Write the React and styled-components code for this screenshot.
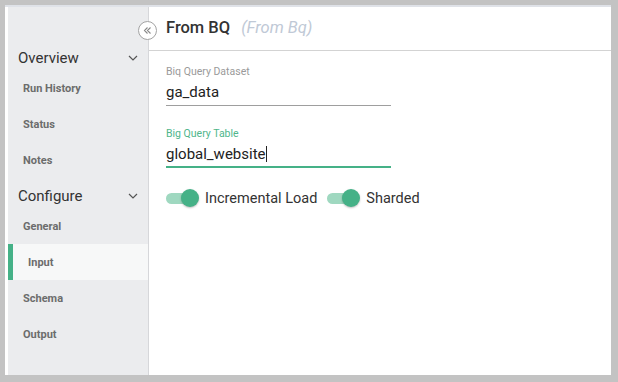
import React, { useState } from "react";
import styled, { createGlobalStyle } from "styled-components";

const GlobalStyle = createGlobalStyle`
  html, body {
    margin: 0;
    padding: 0;
    background: #c3c3c3;
    font-family: Roboto, "Liberation Sans", sans-serif;
  }
`;

const Frame = styled.div`
  width: 618px;
  height: 382px;
  box-sizing: border-box;
  padding: 5px 7px 7px 5px;
`;

const Panel = styled.div`
  display: flex;
  height: 100%;
  box-sizing: border-box;
  border-top: 2px solid #dfe2e8;
  padding-left: 3px;
  background: #fff;
`;

const Sidebar = styled.nav`
  width: 141px;
  flex-shrink: 0;
  background: #ebecee;
  border-right: 1px solid #d6d7da;
  padding-top: 33px;
  box-sizing: border-box;
`;

const SectionHead = styled.div`
  display: flex;
  align-items: center;
  justify-content: space-between;
  height: 30px;
  padding: 5px 10px 0 10px;
  box-sizing: border-box;
  font-size: 15px;
  color: #333;
`;

const NavItem = styled.div`
  position: relative;
  display: flex;
  align-items: center;
  height: 36px;
  padding-left: ${(p) => (p.$active ? "20px" : "15px")};
  font-size: 11px;
  font-weight: 700;
  color: #6c6c6c;
  background: ${(p) => (p.$active ? "#f7f8f8" : "transparent")};
  &::before {
    content: "";
    display: ${(p) => (p.$active ? "block" : "none")};
    position: absolute;
    left: 0;
    top: 0;
    bottom: 0;
    width: 5px;
    background: #45b187;
  }
`;

const Main = styled.main`
  position: relative;
  flex: 1;
  display: flex;
  flex-direction: column;
`;

const Header = styled.header`
  display: flex;
  align-items: center;
  gap: 11px;
  height: 44px;
  padding: 0 17px 2px;
  border-bottom: 1px solid #d3d3d3;
  box-sizing: border-box;
`;

const Title = styled.h1`
  margin: 0;
  font-size: 16.5px;
  font-weight: 500;
  color: #333;
`;

const SubTitle = styled.span`
  font-size: 16.5px;
  font-style: italic;
  color: #c0c9d6;
`;

const Collapse = styled.button`
  position: absolute;
  left: -11px;
  top: 14px;
  width: 19px;
  height: 19px;
  padding: 0;
  border-radius: 50%;
  border: 1px solid #a3a3a3;
  background: #fff;
  display: flex;
  align-items: center;
  justify-content: center;
`;

const Form = styled.div`
  display: flex;
  flex-direction: column;
  padding: 14px 17px;
`;

const Field = styled.div`
  width: 225px;
  margin-bottom: 21px;
`;

const Label = styled.div`
  font-size: 10.5px;
  color: ${(p) => (p.$focused ? "#4fb68b" : "#9a9a9a")};
  margin-bottom: 4px;
`;

const Value = styled.div`
  font-size: 15px;
  color: #222;
  height: 24px;
  line-height: 20px;
  box-sizing: border-box;
  border-bottom: ${(p) => (p.$focused ? "2px solid #45b187" : "1px solid #9e9e9e")};
`;

const Caret = styled.span`
  display: inline-block;
  width: 1px;
  height: 16px;
  background: #222;
  vertical-align: -3px;
`;

const Toggles = styled.div`
  display: flex;
  align-items: center;
`;

const SwitchWrap = styled.label`
  display: flex;
  align-items: center;
  gap: 6px;
  margin-right: 10px;
  font-size: 14.5px;
  color: #333;
  cursor: pointer;
`;

const Track = styled.span`
  position: relative;
  width: 33px;
  height: 18px;
  display: inline-block;
  &::before {
    content: "";
    position: absolute;
    left: 0;
    top: 4px;
    width: 30px;
    height: 11px;
    border-radius: 6px;
    background: ${(p) => (p.$on ? "#9fd8c0" : "#ccc")};
  }
  &::after {
    content: "";
    position: absolute;
    top: 0;
    left: ${(p) => (p.$on ? "15px" : "0")};
    width: 18px;
    height: 18px;
    border-radius: 50%;
    background: ${(p) => (p.$on ? "#45b187" : "#fafafa")};
    box-shadow: 0 1px 2px rgba(0, 0, 0, 0.25);
  }
`;

const Chevron = () => (
  <svg width="10" height="6" viewBox="0 0 10 6">
    <path d="M1 1l4 4 4-4" fill="none" stroke="#555" strokeWidth="1.2" />
  </svg>
);

const Toggle = ({ label, on, onClick }) => (
  <SwitchWrap onClick={onClick}>
    <Track $on={on} />
    {label}
  </SwitchWrap>
);

const App = () => {
  const [incremental, setIncremental] = useState(true);
  const [sharded, setSharded] = useState(true);

  return (
    <>
      <GlobalStyle />
      <Frame>
        <Panel>
          <Sidebar>
            <SectionHead>
              Overview <Chevron />
            </SectionHead>
            <NavItem>Run History</NavItem>
            <NavItem>Status</NavItem>
            <NavItem>Notes</NavItem>
            <SectionHead>
              Configure <Chevron />
            </SectionHead>
            <NavItem>General</NavItem>
            <NavItem $active>Input</NavItem>
            <NavItem>Schema</NavItem>
            <NavItem>Output</NavItem>
          </Sidebar>
          <Main>
            <Collapse>
              <svg width="11" height="11" viewBox="0 0 11 11">
                <path d="M5.5 2.5L2.5 5.5l3 3M8.5 2.5L5.5 5.5l3 3" fill="none" stroke="#888" strokeWidth="1.1" />
              </svg>
            </Collapse>
            <Header>
              <Title>From BQ</Title>
              <SubTitle>(From Bq)</SubTitle>
            </Header>
            <Form>
              <Field>
                <Label>Biq Query Dataset</Label>
                <Value>ga_data</Value>
              </Field>
              <Field>
                <Label $focused>Big Query Table</Label>
                <Value $focused>
                  global_website<Caret />
                </Value>
              </Field>
              <Toggles>
                <Toggle label="Incremental Load" on={incremental} onClick={() => setIncremental(!incremental)} />
                <Toggle label="Sharded" on={sharded} onClick={() => setSharded(!sharded)} />
              </Toggles>
            </Form>
          </Main>
        </Panel>
      </Frame>
    </>
  );
};

export default App;
